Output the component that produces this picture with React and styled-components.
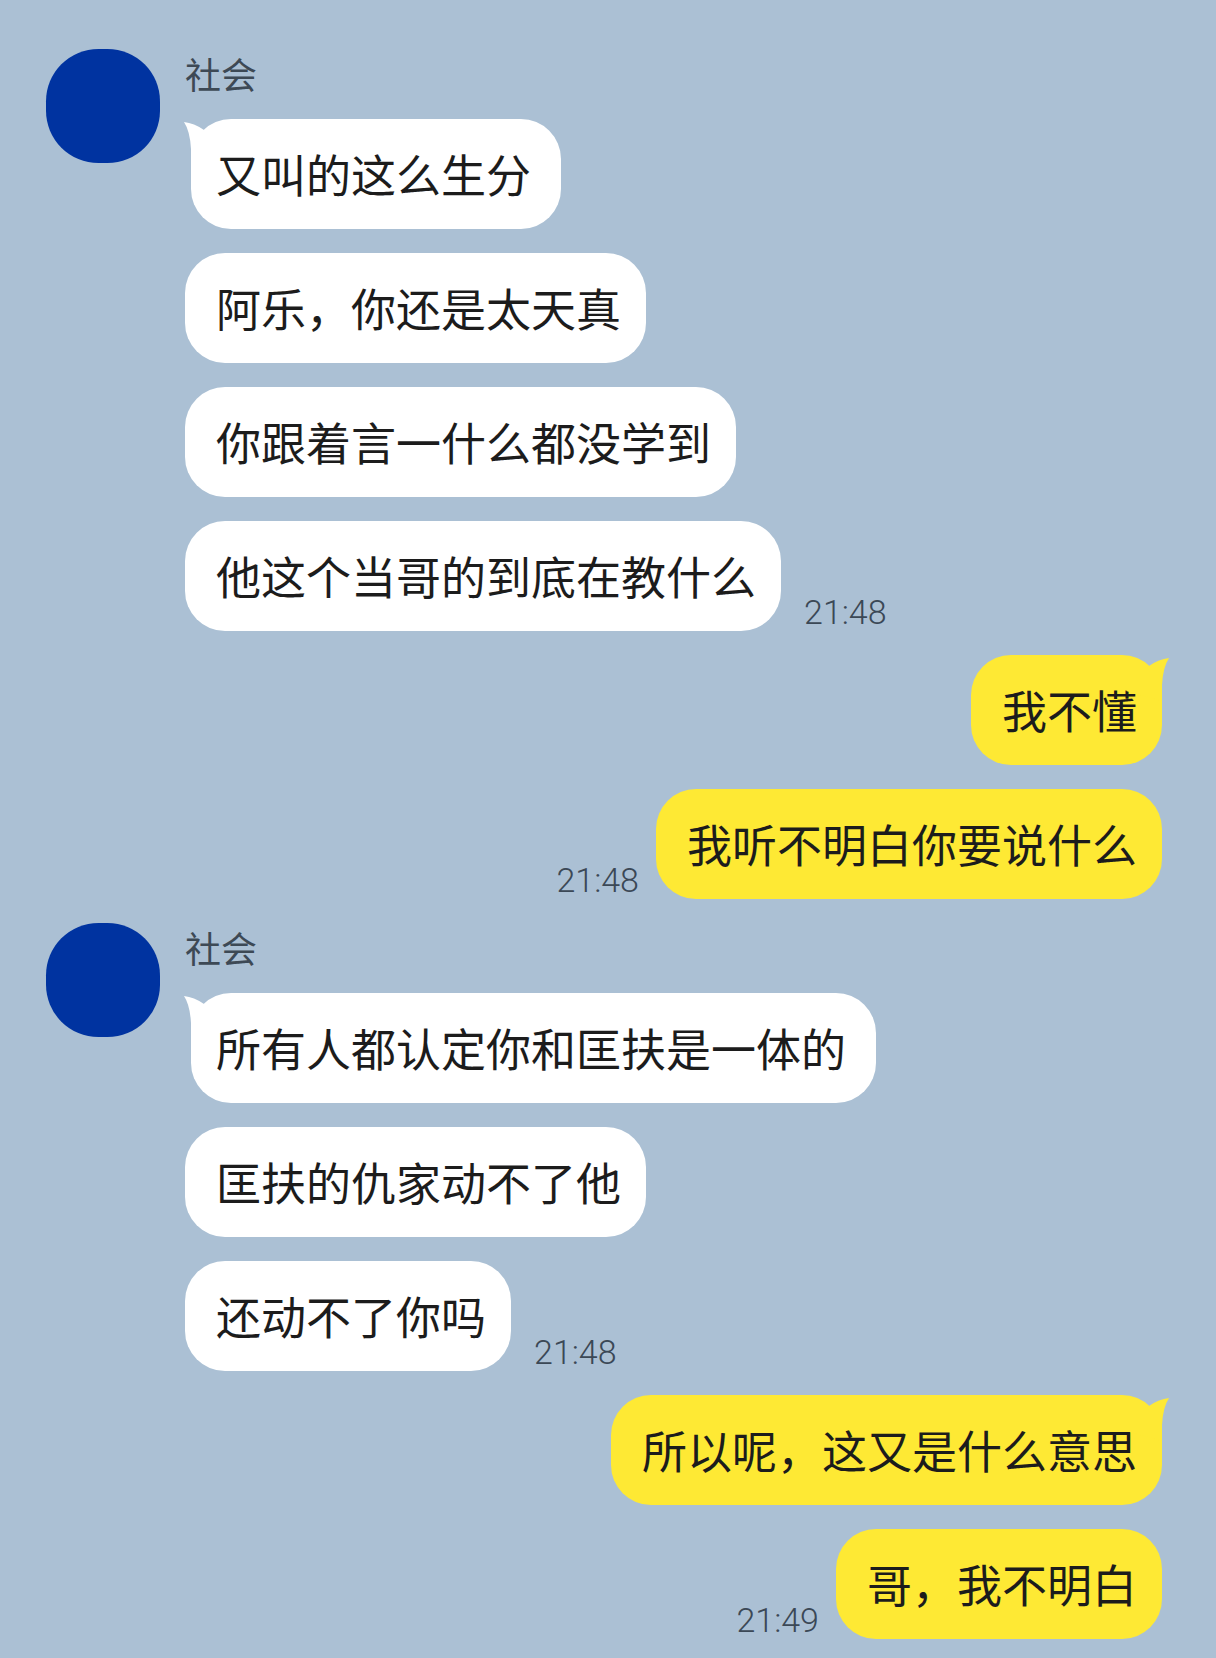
import React from "react";
import styled, { createGlobalStyle, css } from "styled-components";

const Global = createGlobalStyle`
  html, body {
    margin: 0;
    padding: 0;
    background: #abc0d4;
  }
  body {
    font-family: "Noto Sans CJK SC", "Noto Sans", sans-serif;
  }
`;

const Page = styled.div`
  width: 1216px;
  min-height: 1658px;
  box-sizing: border-box;
  padding: 49px 54px 0 46px;
  display: flex;
  flex-direction: column;
  gap: 24px;
  background: #abc0d4;
  overflow: hidden;
`;

const ReceivedGroup = styled.div`
  display: flex;
  align-items: flex-start;
  gap: 25px;
`;

const Avatar = styled.div`
  flex: none;
  width: 114px;
  height: 114px;
  background: #0033a0;
  border-radius: 46% / 46%;
`;

const Column = styled.div`
  display: flex;
  flex-direction: column;
  gap: 24px;
  align-items: ${(p) => (p.$sent ? "flex-end" : "flex-start")};
`;

const Name = styled.div`
  margin-top: 2px;
  font-size: 36px;
  line-height: 44px;
  color: #3d4955;
`;

const Row = styled.div`
  display: flex;
  align-items: flex-end;
  gap: ${(p) => (p.$sent ? "17px" : "23px")};
`;

const Bubble = styled.div`
  position: relative;
  height: 110px;
  line-height: 110px;
  font-size: 45px;
  color: #1c1c1c;
  white-space: nowrap;
  border-radius: 40px;
  background: ${(p) => (p.$sent ? "#fee934" : "#ffffff")};
  padding: 0 25px 0 31px;
  ${(p) =>
    p.$tail &&
    !p.$sent &&
    css`
      margin-left: 6px;
      padding: 0 30px 0 25px;
    `}
`;

const TailSvg = styled.svg`
  position: absolute;
  top: 0;
  width: 44px;
  height: 50px;
  ${(p) =>
    p.$sent
      ? css`
          right: -8px;
          transform: scaleX(-1);
        `
      : css`
          left: -8px;
        `}
`;

const Time = styled.span`
  flex: none;
  font-family: Roboto, "Liberation Sans", sans-serif;
  font-weight: 300;
  font-size: 34px;
  line-height: 34px;
  margin-bottom: 2px;
  color: #3b4856;
`;

function Tail({ sent }) {
  return (
    <TailSvg $sent={sent} viewBox="-8 0 44 50" aria-hidden="true">
      <path
        d="M-7 3 Q3 4 13 11 L36 36 L0 46 L0 30 Q-1 12 -7 3 Z"
        fill={sent ? "#fee934" : "#ffffff"}
      />
    </TailSvg>
  );
}

function Message({ text, sent, tail, time }) {
  return (
    <Row $sent={sent}>
      {sent && time && <Time>{time}</Time>}
      <Bubble $sent={sent} $tail={tail}>
        {tail && <Tail sent={sent} />}
        {text}
      </Bubble>
      {!sent && time && <Time>{time}</Time>}
    </Row>
  );
}

function Received({ name, messages, time }) {
  return (
    <ReceivedGroup>
      <Avatar />
      <Column>
        <Name>{name}</Name>
        {messages.map((m, i) => (
          <Message
            key={i}
            text={m}
            tail={i === 0}
            time={i === messages.length - 1 ? time : null}
          />
        ))}
      </Column>
    </ReceivedGroup>
  );
}

function Sent({ messages, time }) {
  return (
    <Column $sent>
      {messages.map((m, i) => (
        <Message
          key={i}
          sent
          text={m}
          tail={i === 0}
          time={i === messages.length - 1 ? time : null}
        />
      ))}
    </Column>
  );
}

export default function App() {
  return (
    <>
      <Global />
      <Page>
        <Received
          name="社会"
          time="21:48"
          messages={[
            "又叫的这么生分",
            "阿乐，你还是太天真",
            "你跟着言一什么都没学到",
            "他这个当哥的到底在教什么",
          ]}
        />
        <Sent time="21:48" messages={["我不懂", "我听不明白你要说什么"]} />
        <Received
          name="社会"
          time="21:48"
          messages={[
            "所有人都认定你和匡扶是一体的",
            "匡扶的仇家动不了他",
            "还动不了你吗",
          ]}
        />
        <Sent
          time="21:49"
          messages={["所以呢，这又是什么意思", "哥，我不明白"]}
        />
      </Page>
    </>
  );
}
